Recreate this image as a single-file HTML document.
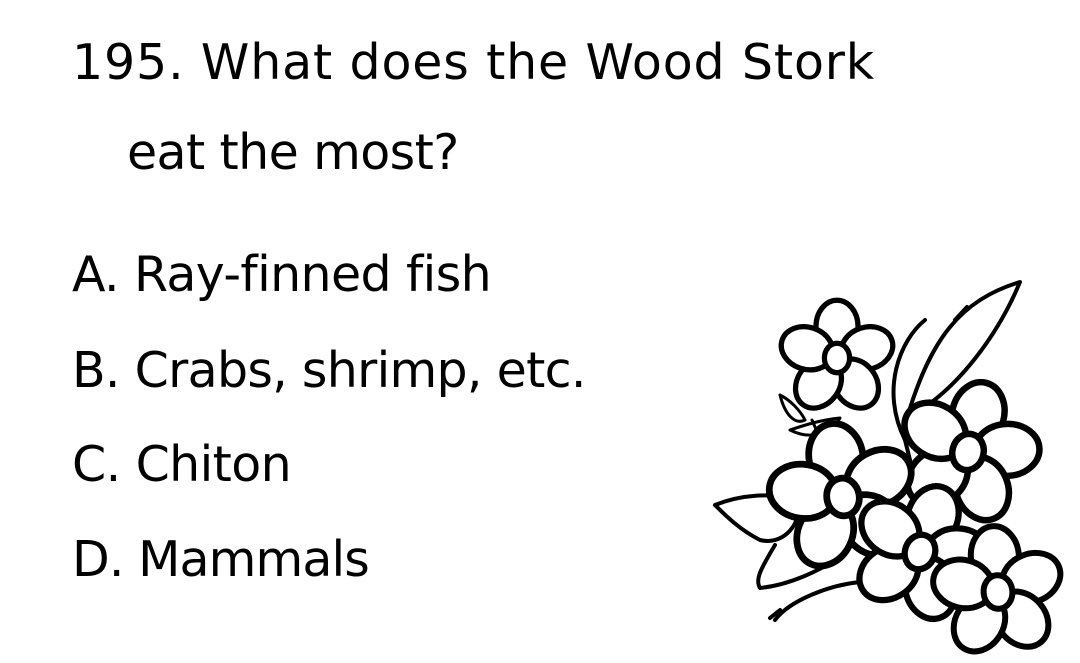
<!DOCTYPE html>
<html><head><style>
body{margin:0;width:1080px;height:663px;background:#fff;overflow:hidden;position:relative;font-family:"DejaVu Sans","Liberation Sans",sans-serif;color:#000}
.t{position:absolute;font-size:49px;white-space:nowrap;line-height:1;letter-spacing:-0.6px}
</style></head><body>
<div class="t" style="left:72px;top:38px;letter-spacing:0.85px">195. What does the Wood Stork</div>
<div class="t" style="left:127px;top:128px">eat the most?</div>
<div class="t" style="left:72px;top:250px">A. Ray-finned fish</div>
<div class="t" style="left:72px;top:346px;letter-spacing:-0.7px">B. Crabs, shrimp, etc.</div>
<div class="t" style="left:72px;top:440px">C. Chiton</div>
<div class="t" style="left:72px;top:535px;letter-spacing:-0.9px">D. Mammals</div>
<svg width="1080" height="663" style="position:absolute;left:0;top:0" fill="#fff" stroke="#000" stroke-width="5" stroke-linecap="round" stroke-linejoin="round">
<defs>
<g id="fl">
<ellipse cx="0" cy="-30" rx="20" ry="25"/>
<ellipse cx="0" cy="-30" rx="20" ry="25" transform="rotate(72)"/>
<ellipse cx="0" cy="-30" rx="20" ry="25" transform="rotate(144)"/>
<ellipse cx="0" cy="-30" rx="20" ry="25" transform="rotate(216)"/>
<ellipse cx="0" cy="-30" rx="20" ry="25" transform="rotate(288)"/>
<ellipse rx="12" ry="14"/>
</g>
</defs>
<path d="M907 418 C 930 340, 960 300, 1020 282 C 1000 330, 960 390, 907 418 Z" stroke-width="4"/>
<path d="M925 320 C 900 340, 880 390, 905 440 L 925 520" fill="none" stroke-width="4"/>
<path d="M967 307 L 955 320" fill="none" stroke-width="4"/>
<path d="M715 505 C 740 495, 770 492, 800 500 C 800 530, 780 545, 760 540 C 740 530, 725 515, 715 505 Z" stroke-width="4"/>
<path d="M775 545 C 760 570, 755 580, 760 588 C 790 585, 820 570, 835 560" stroke-width="4"/>
<path d="M775 620 C 790 600, 830 585, 860 582 M780 610 L 770 618" fill="none" stroke-width="4"/>
<path d="M780 395 C 790 400, 800 410, 805 420 C 795 425, 785 415, 780 395 Z M790 430 C 805 425, 820 420, 840 418 C 830 435, 810 440, 790 430 Z M812 420 L 825 450" stroke-width="3"/>
<use href="#fl" transform="translate(837,358) scale(1.05)"/>
<use href="#fl" transform="translate(968,452) scale(1.3) rotate(15)"/>
<use href="#fl" transform="translate(843,497) scale(1.35) rotate(-10)"/>
<use href="#fl" transform="translate(920,552) scale(1.25) rotate(20)"/>
<use href="#fl" transform="translate(998,592) scale(1.2) rotate(-5)"/>
</svg>
</body></html>
